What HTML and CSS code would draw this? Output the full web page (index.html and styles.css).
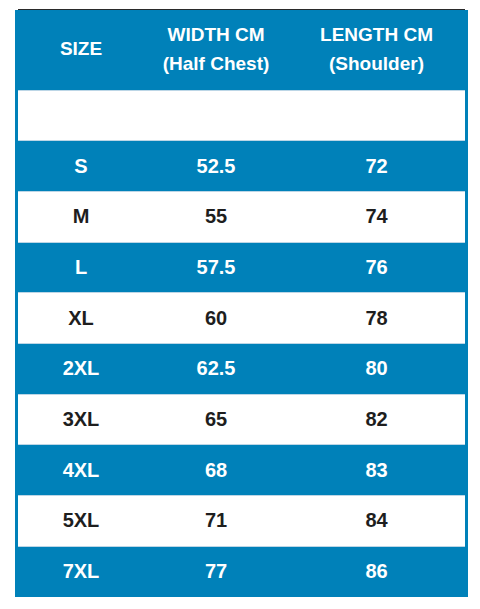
FILE: index.html
```
<!DOCTYPE html>
<html lang="en">
<head>
  <meta charset="UTF-8" />
  <meta name="viewport" content="width=device-width, initial-scale=1.0" />
  <title>Size Chart</title>
  <link rel="stylesheet" href="styles.css">
</head>
<body>

  <div class="chart">
    <div class="top-rule"></div>
    <div class="chart-box">
      <table class="size-table">
        <colgroup>
          <col class="col-size">
          <col class="col-width">
          <col class="col-length">
        </colgroup>
        <thead>
          <tr class="head">
            <th>SIZE</th>
            <th>WIDTH CM<br>(Half Chest)</th>
            <th>LENGTH CM<br>(Shoulder)</th>
          </tr>
        </thead>
        <tbody>
          <tr class="light empty"><td></td><td></td><td></td></tr>
          <tr class="blue"><td>S</td><td>52.5</td><td>72</td></tr>
          <tr class="light"><td>M</td><td>55</td><td>74</td></tr>
          <tr class="blue"><td>L</td><td>57.5</td><td>76</td></tr>
          <tr class="light"><td>XL</td><td>60</td><td>78</td></tr>
          <tr class="blue"><td>2XL</td><td>62.5</td><td>80</td></tr>
          <tr class="light"><td>3XL</td><td>65</td><td>82</td></tr>
          <tr class="blue"><td>4XL</td><td>68</td><td>83</td></tr>
          <tr class="light"><td>5XL</td><td>71</td><td>84</td></tr>
          <tr class="blue"><td>7XL</td><td>77</td><td>86</td></tr>
        </tbody>
      </table>
    </div>
  </div>

</body>
</html>
```

FILE: styles.css
```
* {
  margin: 0; padding: 0;
  box-sizing: border-box;
}

body {
  background: #fff;
  font-family: 'Liberation Sans', Arial, sans-serif;
  padding-top: 9px;
}

.chart {
  margin-left: 15px;
  width: 453px;
}

.top-rule {
  height: 1px;
  margin: 0 3px;
  background: #2a2a2a;
}

.chart-box {
  background: #0081b9;
  padding: 0 3px;
}

.size-table {
  width: 447px;
  border-collapse: collapse;
  table-layout: fixed;
  font-weight: bold;
  text-align: center;
}

.col-size { width: 126px; }
.col-width { width: 144px; }
.col-length { width: 177px; }

.head th {
  height: 80px;
  color: #fff;
  font-size: 19px;
  line-height: 29px;
  vertical-align: middle;
  padding-bottom: 2px;
}

.size-table td {
  height: 50.7px;
  font-size: 20px;
  vertical-align: middle;
}

.blue td {
  color: #fff;
}

.light td {
  background: #fff;
  color: #1e1e1e;
  border-top: 1px solid #bcd6e6;
  border-bottom: 1px solid #bcd6e6;
}
```
